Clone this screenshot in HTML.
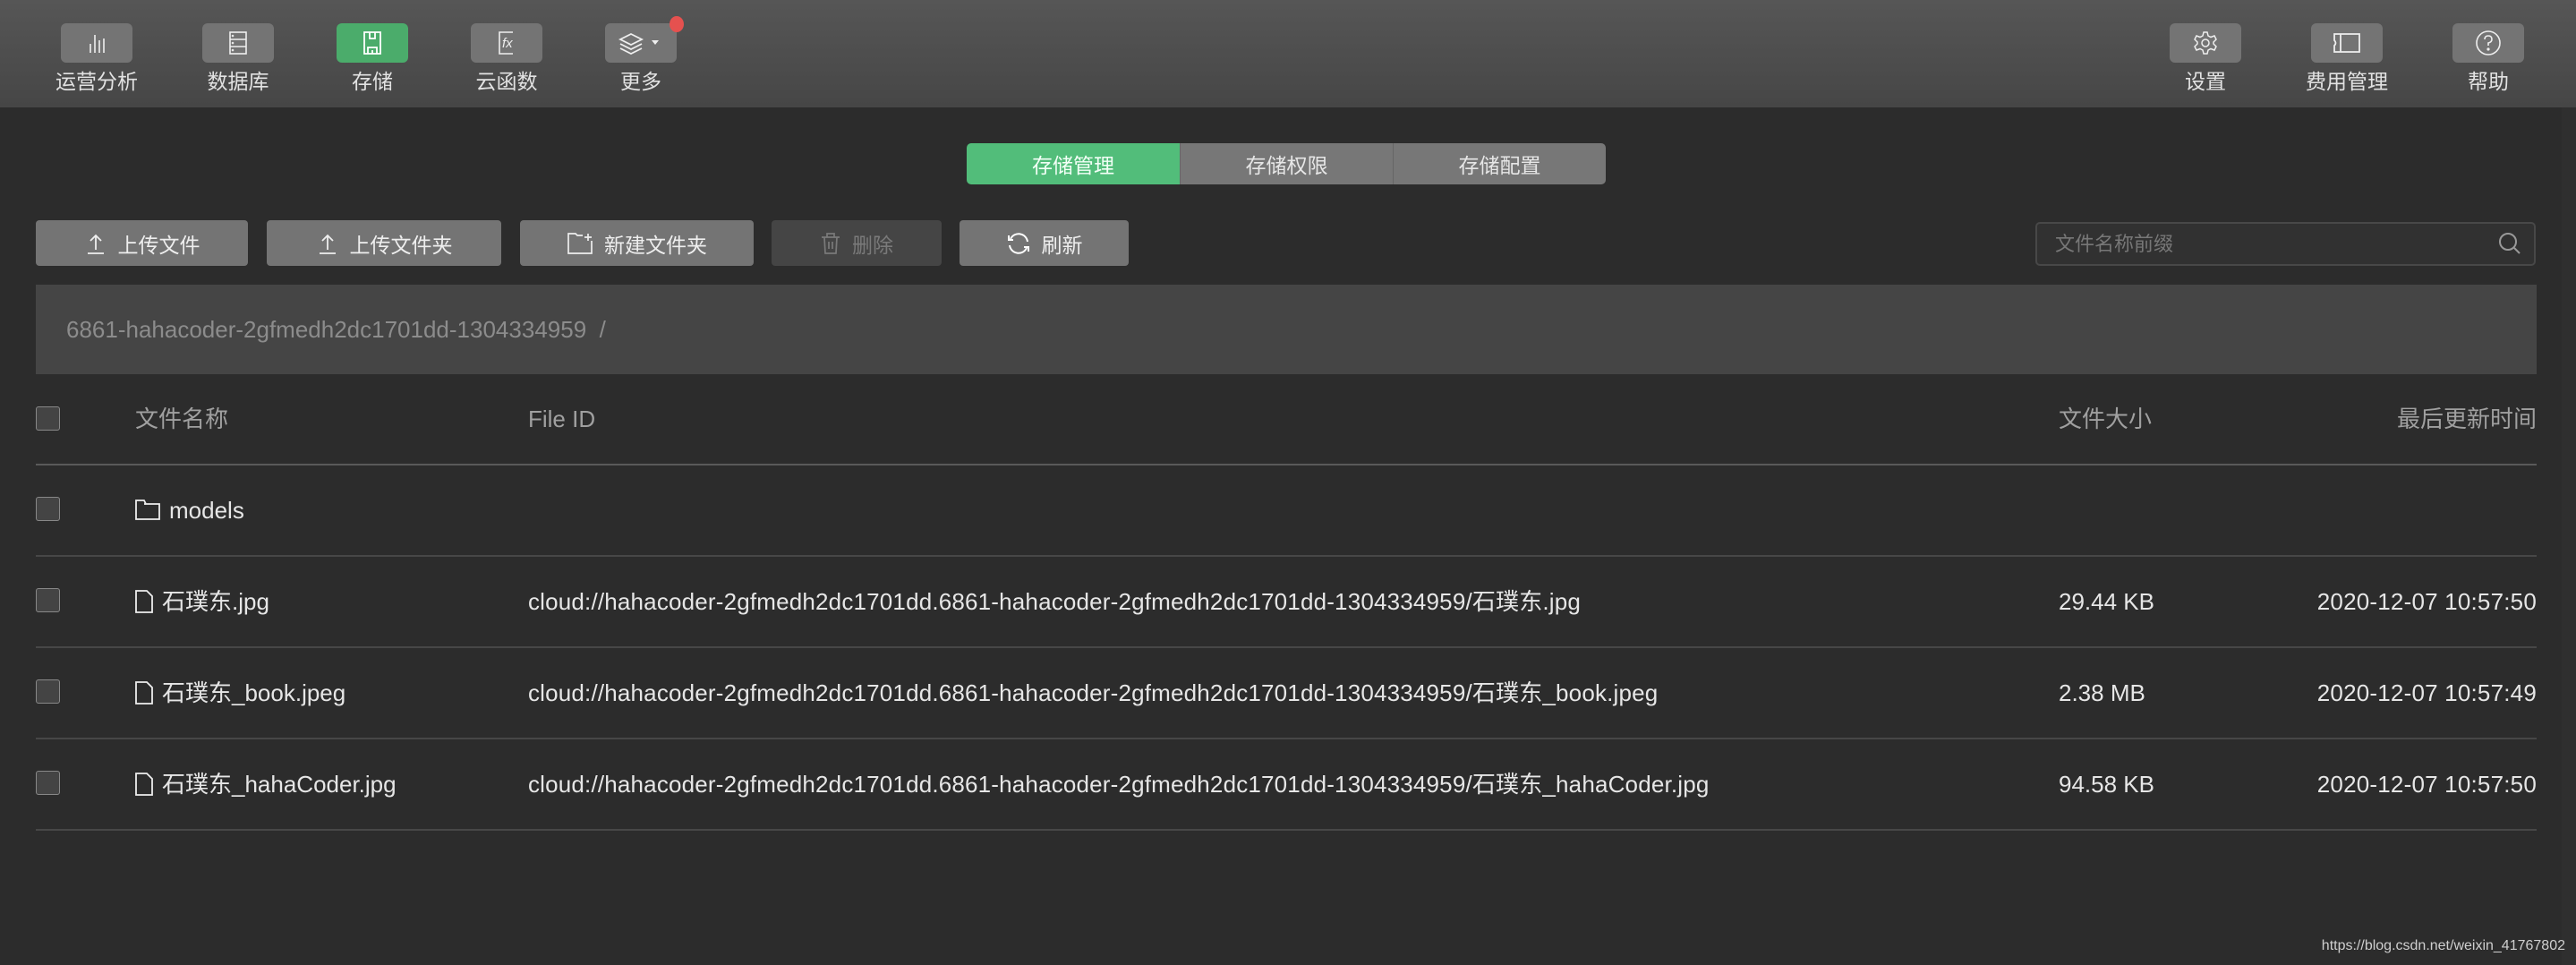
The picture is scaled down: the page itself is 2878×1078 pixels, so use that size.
<!DOCTYPE html>
<html><head><meta charset="utf-8"><style>
*{margin:0;padding:0;box-sizing:border-box}
body{width:2878px;height:1078px;background:#2c2c2c;position:relative;overflow:hidden;font-family:"Liberation Sans","Noto Sans CJK SC",sans-serif;color:#e6e6e6}
.abs{position:absolute}
.hdr{left:0;top:0;width:2878px;height:120px;background:linear-gradient(#565656,#464646)}
.nb{position:absolute;top:26px;width:80px;height:44px;border-radius:6px;background:#747474;display:flex;align-items:center;justify-content:center}
.nl{position:absolute;top:76px;width:160px;text-align:center;font-size:23px;color:#e2e2e2;line-height:30px}
.tab{position:absolute;top:160px;height:46px;width:238px;background:#777;color:#e6e6e6;font-size:23px;display:flex;align-items:center;justify-content:center}
.btn{position:absolute;top:246px;height:51px;border-radius:4px;background:#747474;color:#eee;font-size:23px;display:flex;align-items:center;justify-content:center;gap:12px}
.cb{position:absolute;left:40px;width:27px;height:27px;border:1.5px solid #888;border-radius:3px;background:#444}
.line{position:absolute;left:40px;width:2794px;height:2px;background:#474747}
.t{position:absolute;font-size:26px;line-height:30px;white-space:nowrap}
.id{letter-spacing:0.18px}
.d{letter-spacing:0.2px}
.h{color:#a0a0a0}
</style></head><body>
<div class="abs hdr"></div>
<div class="nb" style="left:68px"><svg width="26" height="26" viewBox="0 0 26 26" fill="none" stroke="#eee" stroke-width="1.6"><path d="M6 24V14M11 24V4M16 24V10M21 24V8"/></svg></div>
<div class="nl" style="left:28px">运营分析</div>
<div class="nb" style="left:226px"><svg width="26" height="28" viewBox="0 0 26 28" fill="none" stroke="#eee" stroke-width="1.6"><rect x="4" y="2" width="18" height="24"/><path d="M4 10H22M4 18H22"/><circle cx="7" cy="6" r=".5"/><circle cx="7" cy="14" r=".5"/><circle cx="7" cy="22" r=".5"/></svg></div>
<div class="nl" style="left:186px">数据库</div>
<div class="nb" style="left:376px;background:#4bac6b"><svg width="26" height="28" viewBox="0 0 26 28" fill="none" stroke="#fff" stroke-width="1.8"><path d="M4 2H22V26H4Z"/><path d="M10 2V9H16V2M8 26V19H18V26M13 26V22"/></svg></div>
<div class="nl" style="left:336px">存储</div>
<div class="nb" style="left:526px"><svg width="26" height="28" viewBox="0 0 26 28" fill="none" stroke="#eee" stroke-width="1.6"><path d="M20 2H5V26H20"/><text x="8" y="19" font-size="15" font-style="italic" fill="#eee" stroke="none" font-family="Liberation Sans">fx</text></svg></div>
<div class="nl" style="left:486px">云函数</div>
<div class="nb" style="left:676px"><svg width="50" height="28" viewBox="0 0 50 28" fill="none" stroke="#eee" stroke-width="1.8"><path d="M14 4L26 10L14 16L2 10Z"/><path d="M2 15L14 21L26 15M2 20L14 26L26 20"/><path d="M37 11H45L41 16Z" fill="#eee" stroke="none"/></svg></div>
<div class="abs" style="left:748px;top:18px;width:16px;height:18px;border-radius:50%;background:#e5514f"></div>
<div class="nl" style="left:636px">更多</div>
<div class="nb" style="left:2424px"><svg width="28" height="28" viewBox="0 0 28 28" fill="none" stroke="#eee" stroke-width="1.5"><circle cx="14" cy="14" r="4"/><path d="M12 2H16L17 6L20 7.5L24 6L26 10L23 13V15L26 18L24 22L20 20.5L17 22L16 26H12L11 22L8 20.5L4 22L2 18L5 15V13L2 10L4 6L8 7.5L11 6Z"/></svg></div>
<div class="nl" style="left:2384px">设置</div>
<div class="nb" style="left:2582px"><svg width="32" height="26" viewBox="0 0 32 26" fill="none" stroke="#eee" stroke-width="1.8"><path d="M2 3H30V23H2V16Q5 13 2 10Z"/><path d="M9 3V23"/></svg></div>
<div class="nl" style="left:2542px">费用管理</div>
<div class="nb" style="left:2740px"><svg width="32" height="32" viewBox="0 0 32 32" fill="none" stroke="#eee" stroke-width="1.6"><circle cx="16" cy="16" r="13"/><path d="M12 12Q12 8 16 8Q20 8 20 12Q20 15 16 16V19"/><circle cx="16" cy="23" r=".8" fill="#eee"/></svg></div>
<div class="nl" style="left:2700px">帮助</div>
<div class="abs" style="left:2862px;top:120px;width:16px;height:958px;background:#2f2f2f"></div>
<div class="tab" style="left:1080px;background:#52bd7a;border-radius:5px 0 0 5px;color:#f2fff6">存储管理</div>
<div class="tab" style="left:1318px;border-left:1px solid #666">存储权限</div>
<div class="tab" style="left:1556px;border-left:1px solid #666;border-radius:0 5px 5px 0">存储配置</div>
<div class="btn" style="left:40px;width:237px"><svg width="26" height="26" viewBox="0 0 26 26" fill="none" stroke="#eee" stroke-width="1.8"><path d="M13 20V4M7 10L13 4L19 10M4 24H22"/></svg>上传文件</div>
<div class="btn" style="left:298px;width:262px"><svg width="26" height="26" viewBox="0 0 26 26" fill="none" stroke="#eee" stroke-width="1.8"><path d="M13 20V4M7 10L13 4L19 10M4 24H22"/></svg>上传文件夹</div>
<div class="btn" style="left:581px;width:261px"><svg width="30" height="26" viewBox="0 0 30 26" fill="none" stroke="#eee" stroke-width="1.7"><path d="M18 4H12L10 2H2V24H28V10M24 2V10M20 6H28"/></svg>新建文件夹</div>
<div class="btn" style="left:862px;width:190px;background:#454545;color:#7a7a7a"><svg width="24" height="26" viewBox="0 0 24 26" fill="none" stroke="#7a7a7a" stroke-width="1.7"><path d="M2 6H22M8 6V2H16V6M5 6L6 24H18L19 6M10 11V19M14 11V19"/></svg>删除</div>
<div class="btn" style="left:1072px;width:189px"><svg width="28" height="28" viewBox="0 0 28 28" fill="none" stroke="#fff" stroke-width="2"><path d="M24 12A10 10 0 0 0 5 9M4 16A10 10 0 0 0 23 19"/><path d="M3 5V10H8M25 23V18H20"/></svg>刷新</div>
<div class="abs" style="left:2274px;top:248px;width:559px;height:49px;border:2px solid #484848;border-radius:5px;background:#313131"></div>
<div class="t" style="left:2296px;top:258px;font-size:22px;color:#777">文件名称前缀</div>
<svg class="abs" style="left:2790px;top:258px" width="28" height="28" viewBox="0 0 28 28" fill="none" stroke="#999" stroke-width="2"><circle cx="12" cy="12" r="9"/><path d="M19 19L25 25"/></svg>
<div class="abs" style="left:40px;top:318px;width:2794px;height:100px;background:#454545"></div>
<div class="t" style="left:74px;top:353px;color:#8c8c8c">6861-hahacoder-2gfmedh2dc1701dd-1304334959&nbsp; /</div>
<div class="cb" style="top:454px"></div>
<div class="t h" style="left:151px;top:453px">文件名称</div>
<div class="t h" style="left:590px;top:453px">File ID</div>
<div class="t h" style="left:2300px;top:453px">文件大小</div>
<div class="t h" style="right:44px;top:453px">最后更新时间</div>
<div class="line" style="top:518px;background:#5a5a5a"></div>

<div class="cb" style="top:555px"></div>
<svg class="abs" style="left:151px;top:557px" width="28" height="24" viewBox="0 0 28 24" fill="none" stroke="#eee" stroke-width="1.8"><path d="M1 2H10L12 6H27V23H1Z"/><path d="M10 6H12"/></svg>
<div class="t" style="left:189px;top:555px">models</div>
<div class="line" style="top:620px"></div>

<div class="cb" style="top:657px"></div>
<svg class="abs" style="left:151px;top:659px" width="20" height="26" viewBox="0 0 20 26" fill="none" stroke="#eee" stroke-width="1.8"><path d="M1 1H13L19 7V25H1Z"/></svg>
<div class="t" style="left:181px;top:657px">石璞东.jpg</div>
<div class="t id" style="left:590px;top:657px">cloud://hahacoder-2gfmedh2dc1701dd.6861-hahacoder-2gfmedh2dc1701dd-1304334959/石璞东.jpg</div>
<div class="t" style="left:2300px;top:657px">29.44 KB</div>
<div class="t d" style="right:44px;top:657px">2020-12-07 10:57:50</div>
<div class="line" style="top:722px"></div>

<div class="cb" style="top:759px"></div>
<svg class="abs" style="left:151px;top:761px" width="20" height="26" viewBox="0 0 20 26" fill="none" stroke="#eee" stroke-width="1.8"><path d="M1 1H13L19 7V25H1Z"/></svg>
<div class="t" style="left:181px;top:759px">石璞东_book.jpeg</div>
<div class="t id" style="left:590px;top:759px">cloud://hahacoder-2gfmedh2dc1701dd.6861-hahacoder-2gfmedh2dc1701dd-1304334959/石璞东_book.jpeg</div>
<div class="t" style="left:2300px;top:759px">2.38 MB</div>
<div class="t d" style="right:44px;top:759px">2020-12-07 10:57:49</div>
<div class="line" style="top:824px"></div>

<div class="cb" style="top:861px"></div>
<svg class="abs" style="left:151px;top:863px" width="20" height="26" viewBox="0 0 20 26" fill="none" stroke="#eee" stroke-width="1.8"><path d="M1 1H13L19 7V25H1Z"/></svg>
<div class="t" style="left:181px;top:861px">石璞东_hahaCoder.jpg</div>
<div class="t id" style="left:590px;top:861px">cloud://hahacoder-2gfmedh2dc1701dd.6861-hahacoder-2gfmedh2dc1701dd-1304334959/石璞东_hahaCoder.jpg</div>
<div class="t" style="left:2300px;top:861px">94.58 KB</div>
<div class="t d" style="right:44px;top:861px">2020-12-07 10:57:50</div>
<div class="line" style="top:926px"></div>

<div class="t" style="right:12px;top:1047px;font-size:16px;line-height:20px;color:#cfcfcf">https://blog.csdn.net/weixin_41767802</div>
</body></html>
